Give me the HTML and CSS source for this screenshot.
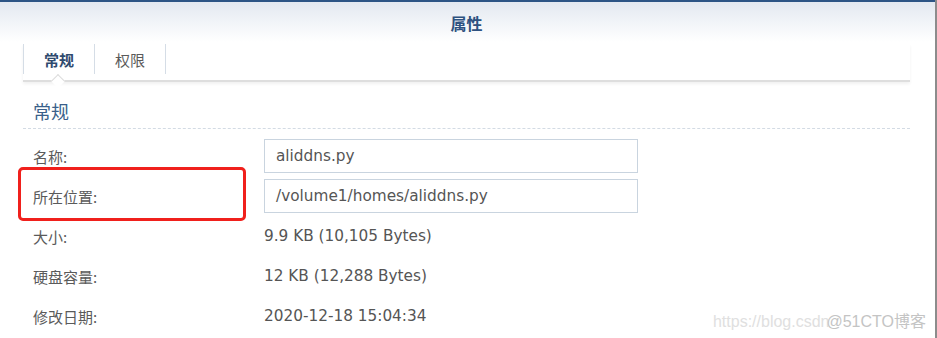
FILE: index.html
```html
<!DOCTYPE html>
<html lang="zh-CN">
<head>
<meta charset="utf-8">
<title>属性</title>
<link rel="stylesheet" href="styles.css">
</head>
<body>
<div class="window">
  <div class="panel">
    <div class="header"><span class="title">属性</span></div>
    <div class="tabs">
      <div class="tab active">常规</div>
      <div class="tab">权限</div>
      <div class="caret"></div>
    </div>
    <div class="content">
      <h2 class="section">常规</h2>
      <div class="form">
        <div class="label">名称:</div>
        <div class="field">aliddns.py</div>
        <div class="label">所在位置:</div>
        <div class="field">/volume1/homes/aliddns.py</div>
        <div class="label">大小:</div>
        <div class="value">9.9 KB (10,105 Bytes)</div>
        <div class="label">硬盘容量:</div>
        <div class="value">12 KB (12,288 Bytes)</div>
        <div class="label">修改日期:</div>
        <div class="value">2020-12-18 15:04:34</div>
      </div>
    </div>
    <div class="highlight"></div>
    <div class="watermark"><span class="wm-a">https://blog.csdn</span><span class="wm-b">@51CTO博客</span></div>
  </div>
  <div class="edge"></div>
</div>
</body>
</html>
```
FILE: styles.css
```css
html, body {
  margin: 0;
  padding: 0;
  background: #ffffff;
}
body {
  font-family: "Noto Sans CJK SC", "Noto Sans", sans-serif;
  width: 937px;
  height: 338px;
  overflow: hidden;
}
.window {
  display: flex;
  height: 338px;
}
.panel {
  position: relative;
  width: 935px;
  border-top: 2px solid #2d5485;
  box-sizing: border-box;
}
.edge {
  width: 2px;
  background: #8c8c8c;
}
.header {
  height: 40px;
  background: linear-gradient(#e3e8f0 0%, #f1f4f8 50%, #ffffff 100%);
  display: flex;
  align-items: center;
  justify-content: center;
  padding-top: 1px;
  box-sizing: border-box;
}
.title {
  font-size: 16px;
  font-weight: bold;
  color: #2e5280;
  margin-left: -2px;
}
.tabs {
  position: relative;
  display: flex;
  margin: 2px 25px 0 23px;
  height: 38px;
  border-bottom: 2px solid #dedede;
  box-shadow: 0 2px 3px rgba(0, 0, 0, 0.06);
  box-sizing: border-box;
}
.tab {
  height: 30px;
  padding: 0 20px;
  width: 71px;
  box-sizing: border-box;
  display: flex;
  align-items: center;
  justify-content: center;
  font-size: 15px;
  color: #5a5a5a;
  border-right: 1px solid #d5dde6;
}
.tab:first-child {
  border-left: 1px solid #d5dde6;
  width: 72px;
}
.tab.active {
  font-weight: bold;
  color: #2f4a6e;
}
.caret {
  position: absolute;
  left: 30px;
  bottom: -6px;
  width: 9px;
  height: 9px;
  background: #ffffff;
  border-left: 1px solid #dcdcdc;
  border-top: 1px solid #dcdcdc;
  transform: rotate(45deg);
}
.content {
  padding: 0 25px 0 23px;
}
.section {
  margin: 0;
  padding: 16px 0 4px 10px;
  font-size: 18px;
  font-weight: normal;
  color: #3a5f8a;
  line-height: 26px;
  border-bottom: 1px dashed #d3dbe4;
}
.form {
  display: grid;
  grid-template-columns: 231px 374px;
  grid-auto-rows: 34px;
  row-gap: 6px;
  padding: 10px 0 0 10px;
}
.label {
  display: flex;
  align-items: center;
  font-size: 15px;
  color: #5a5a5a;
}
.field, .value {
  display: flex;
  align-items: center;
  font-family: "DejaVu Sans", Verdana, sans-serif;
  font-size: 15.3px;
  color: #555555;
}
.field {
  border: 1px solid #c9d4df;
  padding-left: 11px;
  box-sizing: border-box;
}
.highlight {
  position: absolute;
  left: 18px;
  top: 165px;
  width: 228px;
  height: 54px;
  border: 3px solid #f0201c;
  border-radius: 5px;
  box-sizing: border-box;
}
.watermark {
  position: absolute;
  right: 9px;
  bottom: 6px;
  font-family: "Liberation Sans", Arial, sans-serif;
  font-size: 16px;
  white-space: nowrap;
}
.wm-a {
  color: #e0e0e0;
}
.wm-b {
  color: #c4c4c4;
  margin-left: -3px;
}
```
